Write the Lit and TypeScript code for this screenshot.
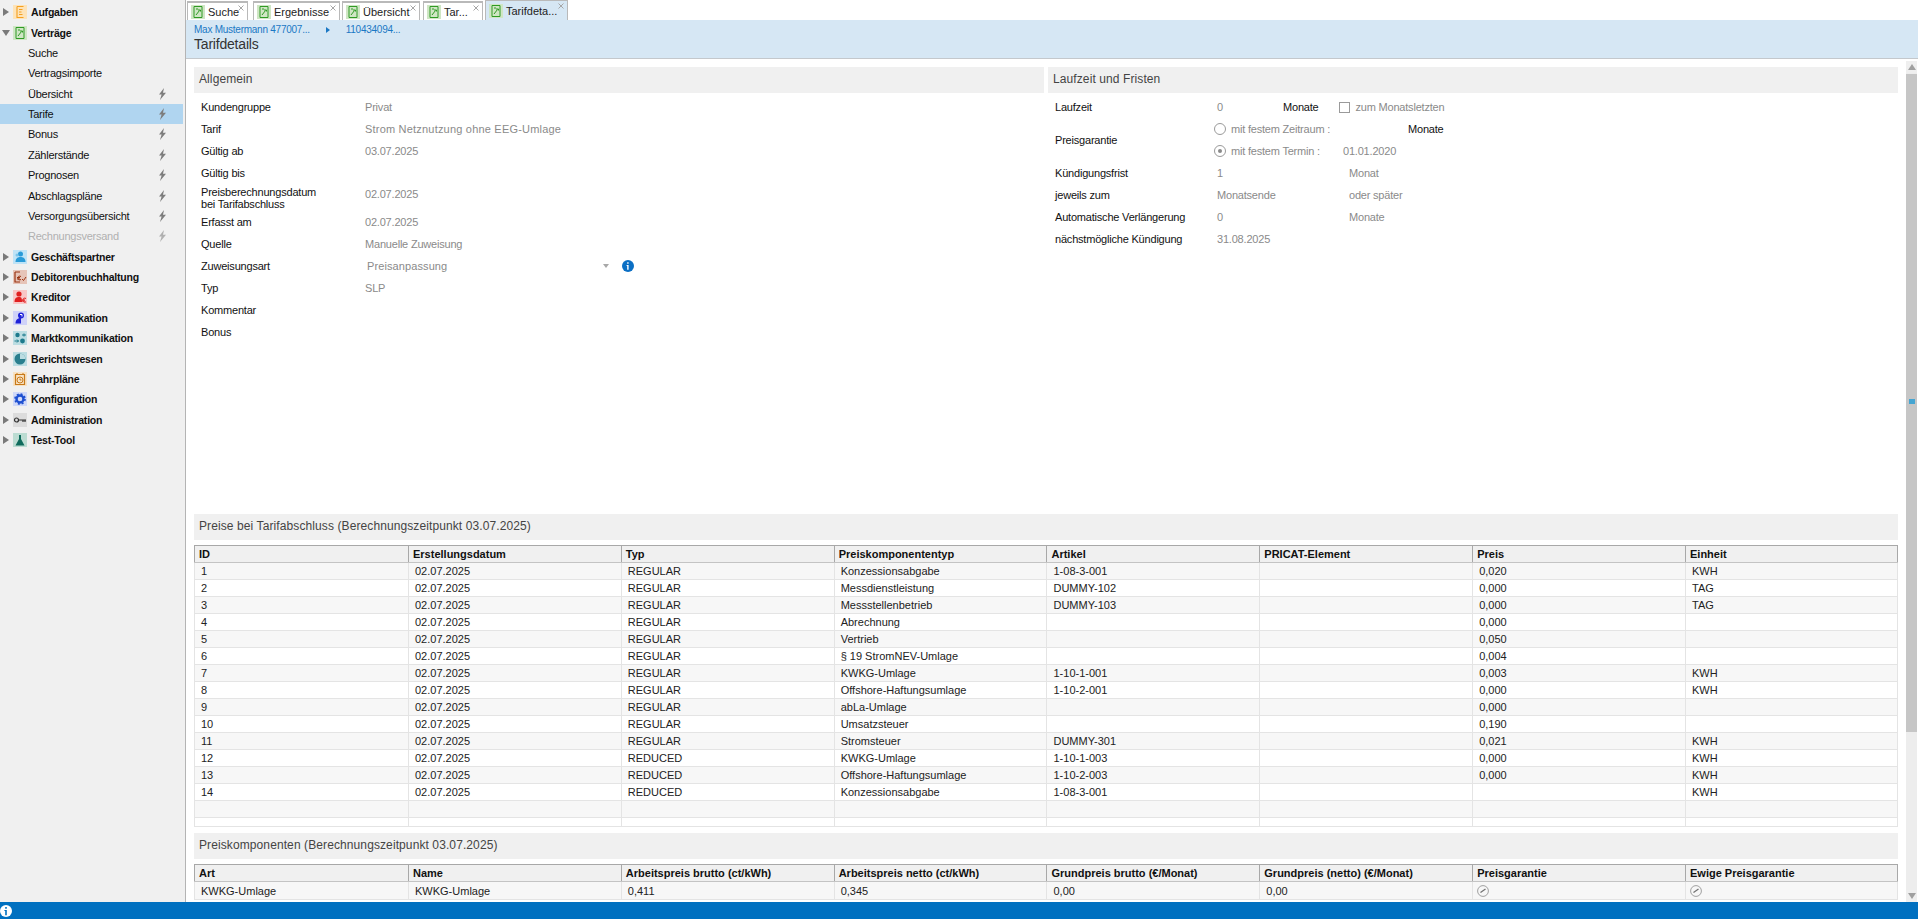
import { css, html, LitElement, svg } from "lit";
import { customElement } from "lit/decorators.js";

const FONT = css`"Liberation Sans", Arial, sans-serif`;

const navIcons: Record<string, { bg: string; art: any }> = {
  Aufgaben: {
    bg: "#fde3b8",
    art: svg`<path d="M4 1.5v11h6.5M4 1.5h6.5" fill="none" stroke="#f5a020" stroke-width="1.1"/><path d="M6 4.5h3.5M6 7h2.5M6 9.5h3.5" stroke="#f5a020"/>`,
  },
  "Verträge": {
    bg: "#cfe6c4",
    art: svg`<path d="M3 1.5h8v11H3z" fill="none" stroke="#2f9a24"/><path d="M5 10l3.5-4.5M7 5h2.5v1.5M5 4h2" fill="none" stroke="#2f9a24"/>`,
  },
  "Geschäftspartner": {
    bg: "#bfe3f6",
    art: svg`<circle cx="7.5" cy="4" r="2.5" fill="#2a9bd8"/><path d="M2.5 12c0-4 2.5-5 5-5s5 1 5 5z" fill="#2a9bd8"/><circle cx="4" cy="5" r="1.5" fill="#7cc4ea"/>`,
  },
  Debitorenbuchhaltung: {
    bg: "#e6c4b8",
    art: svg`<path d="M2 2h5M2 2v10h5" fill="none" stroke="#9a3412" stroke-width="1.2"/><path d="M8 6.5c-2 -1 -3 0 -3 1.5s1 2.5 3 1.5M4 7.5h3M4 9h3" fill="none" stroke="#9a3412"/><path d="M9 9l1.5 1.5L13 7" fill="none" stroke="#9a3412"/>`,
  },
  Kreditor: {
    bg: "#f8c6c6",
    art: svg`<circle cx="6" cy="4" r="2.6" fill="#e02020"/><path d="M1.5 12c0-4 2-5 4.5-5s3 1 3 5z" fill="#e02020"/><path d="M13 8.5c-2-1-3 0-3 1.7s1 2.6 3 1.6M9 10h3M9 11h3" fill="none" stroke="#e02020"/>`,
  },
  Kommunikation: {
    bg: "#cfd2f8",
    art: svg`<circle cx="8" cy="4.5" r="3" fill="#1f22d8"/><path d="M2.5 12.5c0-4 2.5-5.5 5.5-5.5v5.5z" fill="#1f22d8"/><path d="M7 3.5h2v2" fill="none" stroke="#fff"/>`,
  },
  Marktkommunikation: {
    bg: "#bcdde2",
    art: svg`<circle cx="4.5" cy="4" r="2.2" fill="#1d7a8c"/><circle cx="9.5" cy="10" r="2.4" fill="#1d7a8c"/><path d="M9 4h4M11 2.5v3M1.5 10h4M4 8.5l1.5 1.5L4 11.5" fill="none" stroke="#1d7a8c"/>`,
  },
  Berichtswesen: {
    bg: "#bcdde2",
    art: svg`<circle cx="7" cy="7" r="5.5" fill="#2a7f8e"/><path d="M7 7V1.5a5.5 5.5 0 0 1 5.5 5.5z" fill="#bcdde2"/>`,
  },
  "Fahrpläne": {
    bg: "#f7e2c4",
    art: svg`<path d="M2.5 2.5h9v10h-9z" fill="none" stroke="#c87a1a" stroke-width="1.2"/><circle cx="7" cy="8" r="3" fill="none" stroke="#c87a1a"/><path d="M7 6.5V8h1.5M4 1v2M10 1v2" fill="none" stroke="#c87a1a"/>`,
  },
  Konfiguration: {
    bg: "#cfd8f8",
    art: svg`<circle cx="7" cy="7" r="3.5" fill="none" stroke="#1d4fd0" stroke-width="2.4"/><circle cx="7" cy="7" r="5" fill="none" stroke="#1d4fd0" stroke-width="1.6" stroke-dasharray="2 1.93"/>`,
  },
  Administration: {
    bg: "#dcdcdc",
    art: svg`<circle cx="3.5" cy="7" r="2" fill="none" stroke="#333" stroke-width="1.2"/><path d="M5.5 7H13M10 7v2M12 7v2" fill="none" stroke="#333" stroke-width="1.2"/>`,
  },
  "Test-Tool": {
    bg: "#bcdcd2",
    art: svg`<path d="M5.5 1.5h3M6 2v4l-3.5 6.5h9L8 6V2z" fill="#0f6b5c"/>`,
  },
};

const bolt = html`<svg class="bolt" width="9" height="12" viewBox="0 0 9 12"><path d="M6 0L1 6.5h2.6L2 12l6-7.2H5z" fill="#7d7d7d"/></svg>`;

@customElement("side-nav")
class SideNav extends LitElement {
  static styles = css`
    :host {
      display: block;
      width: 185px;
      flex: none;
      background: #f0f0f0;
      border-right: 1px solid #b4b4b4;
      padding-top: 2px;
      font: 11px ${FONT};
      color: #111;
    }
    .row {
      height: 20.38px;
      display: flex;
      align-items: center;
      white-space: nowrap;
    }
    .arrow {
      width: 10px;
      flex: none;
      margin: 0 1px 0 2px;
    }
    .ico {
      width: 14px;
      height: 14px;
      flex: none;
      margin-right: 4px;
    }
    .group {
      font-weight: bold;
      font-size: 10.5px;
      letter-spacing: -0.2px;
    }
    .item {
      padding-left: 28px;
      padding-right: 16px;
      letter-spacing: -0.25px;
      margin-right: 2px;
    }
    .item span {
      flex: 1;
    }
    .active {
      background: #b0d5f0;
    }
    .off {
      color: #b0b0b0;
    }
    .off .bolt {
      opacity: 0.55;
    }
  `;

  group(name: string, open = false) {
    const i = navIcons[name];
    return html`<div class="row group">
      <svg class="arrow" width="10" height="10" viewBox="0 0 10 10">
        ${open
          ? svg`<path d="M0 2h8L4 8z" fill="#7a7a7a"/>`
          : svg`<path d="M1 1l6 4-6 4z" fill="#7a7a7a"/>`}
      </svg>
      <svg class="ico" viewBox="0 0 14 14">
        <rect width="14" height="14" fill=${i.bg} />${i.art}
      </svg>
      ${name}
    </div>`;
  }

  render() {
    const items: [string, boolean, string?][] = [
      ["Suche", false],
      ["Vertragsimporte", false],
      ["Übersicht", true],
      ["Tarife", true, "active"],
      ["Bonus", true],
      ["Zählerstände", true],
      ["Prognosen", true],
      ["Abschlagspläne", true],
      ["Versorgungsübersicht", true],
      ["Rechnungsversand", true, "off"],
    ];
    const rest = [
      "Geschäftspartner",
      "Debitorenbuchhaltung",
      "Kreditor",
      "Kommunikation",
      "Marktkommunikation",
      "Berichtswesen",
      "Fahrpläne",
      "Konfiguration",
      "Administration",
      "Test-Tool",
    ];
    return html`
      ${this.group("Aufgaben")} ${this.group("Verträge", true)}
      ${items.map(
        ([t, b, c]) => html`<div class="row item ${c ?? ""}">
          <span>${t}</span>${b ? bolt : ""}
        </div>`
      )}
      ${rest.map((r) => this.group(r))}
    `;
  }
}

@customElement("tab-bar")
class TabBar extends LitElement {
  static styles = css`
    :host {
      display: flex;
      height: 20px;
      box-sizing: border-box;
      padding: 1px 0 0 1px;
      font: 11px ${FONT};
      color: #222;
      background: #fff;
    }
    .tab {
      position: relative;
      display: flex;
      align-items: center;
      gap: 3px;
      box-sizing: border-box;
      height: 19px;
      padding: 1px 0 0 3px;
      border: 1px solid #b9b9b9;
      border-bottom: none;
      border-top-width: 2px;
      background: #fff;
    }
    .sel {
      background: #d6e7f4;
      border-top-width: 1px;
      height: 20px;
      margin-top: -1px;
    }
    .x {
      position: absolute;
      top: 2px;
      right: 3px;
    }
  `;

  render() {
    const tabs: [string, number, number, boolean?][] = [
      ["Suche", 61, 0],
      ["Ergebnisse", 87, 5],
      ["Übersicht", 78, 2],
      ["Tar...", 60, 3],
      ["Tarifdeta...", 83, 2, true],
    ];
    return tabs.map(
      ([t, w, m, s]) => html`<div class="tab ${s ? "sel" : ""}" style="width:${w}px;margin-left:${m}px">
        <svg width="14" height="14" viewBox="0 0 14 14">
          <rect width="14" height="14" fill="#cfe6c4" />
          <path d="M3 1.5h8v11H3z" fill="none" stroke="#2f9a24" />
          <path d="M5 10l3.5-4.5M7 5h2.5v1.5M5 4h2" fill="none" stroke="#2f9a24" />
        </svg>
        ${t}
        <svg class="x" width="6" height="6" viewBox="0 0 6 6">
          <path d="M.5.5l5 5M5.5.5l-5 5" stroke="#a6a6a6" />
        </svg>
      </div>`
    );
  }
}

const rows: string[][] = [
  ["1", "Konzessionsabgabe", "1-08-3-001", "0,020", "KWH"],
  ["2", "Messdienstleistung", "DUMMY-102", "0,000", "TAG"],
  ["3", "Messstellenbetrieb", "DUMMY-103", "0,000", "TAG"],
  ["4", "Abrechnung", "", "0,000", ""],
  ["5", "Vertrieb", "", "0,050", ""],
  ["6", "§ 19 StromNEV-Umlage", "", "0,004", ""],
  ["7", "KWKG-Umlage", "1-10-1-001", "0,003", "KWH"],
  ["8", "Offshore-Haftungsumlage", "1-10-2-001", "0,000", "KWH"],
  ["9", "abLa-Umlage", "", "0,000", ""],
  ["10", "Umsatzsteuer", "", "0,190", ""],
  ["11", "Stromsteuer", "DUMMY-301", "0,021", "KWH"],
  ["12", "KWKG-Umlage", "1-10-1-003", "0,000", "KWH"],
  ["13", "Offshore-Haftungsumlage", "1-10-2-003", "0,000", "KWH"],
  ["14", "Konzessionsabgabe", "1-08-3-001", "", "KWH"],
];

const gauge = html`<svg class="gauge" width="12" height="12" viewBox="0 0 12 12">
  <circle cx="6" cy="6" r="5.4" fill="none" stroke="#a0a0a0" />
  <path d="M3.5 7.5L8.5 4" stroke="#707070" stroke-width="1.2" />
</svg>`;

@customElement("app-root")
export class AppRoot extends LitElement {
  static styles = css`
    :host {
      display: flex;
      flex-direction: column;
      height: 919px;
      overflow: hidden;
      font: 11px ${FONT};
      color: #111;
      background: #fff;
    }
    .body {
      flex: 1;
      display: flex;
      min-height: 0;
    }
    .main {
      flex: 1;
      min-width: 0;
      display: flex;
      flex-direction: column;
    }
    .head {
      height: 39px;
      flex: none;
      box-sizing: border-box;
      background: #d6e7f4;
      border-bottom: 1px solid #c4c8cc;
      padding: 3px 0 0 8px;
    }
    .crumbs {
      display: flex;
      height: 13px;
      align-items: center;
      color: #1b78c4;
      font-size: 10px;
      letter-spacing: -0.25px;
    }
    .crumbs svg {
      margin: 0 16px 0 16px;
    }
    .title {
      font-size: 14px;
      color: #333;
      line-height: 18px;
      letter-spacing: -0.2px;
      margin-top: -1px;
    }
    .scroller {
      flex: 1;
      min-height: 0;
      display: flex;
    }
    .page {
      flex: 1;
      min-width: 0;
      overflow: hidden;
      padding: 8px 8px 0 8px;
    }
    .bar {
      width: 11px;
      flex: none;
      display: flex;
      flex-direction: column;
      margin: 2px 1px 0 0;
      background: #ededed;
    }
    .btn {
      height: 12px;
      flex: none;
      display: flex;
      align-items: center;
      justify-content: center;
      background: #efefef;
    }
    .thumb {
      height: 658px;
      flex: none;
      background: #c6c6c6;
      position: relative;
      margin-top: 1px;
    }
    .mark {
      position: absolute;
      top: 325px;
      left: 3px;
      right: 2px;
      height: 5px;
      background: #45a5d2;
    }
    .track {
      flex: 1;
    }
    .sec {
      background: #f0f0f0;
      height: 26px;
      line-height: 25px;
      padding-left: 5px;
      font-size: 12px;
      color: #444;
      letter-spacing: 0.1px;
    }
    .cols {
      display: grid;
      grid-template-columns: 850px 1fr;
      gap: 4px;
      height: 447px;
    }
    .form {
      padding: 3px 0 0 7px;
      display: grid;
      grid-template-columns: 164px 1fr;
      grid-auto-rows: 22px;
      align-items: center;
      letter-spacing: -0.2px;
    }
    .val {
      color: #8a8a8a;
      white-space: nowrap;
      display: flex;
      align-items: center;
    }
    .wide {
      letter-spacing: 0.2px;
    }
    .tall {
      line-height: 12px;
      height: 27px;
      padding-top: 1px;
      box-sizing: border-box;
      display: flex;
      align-items: center;
    }
    .tallrow {
      height: 27px;
      padding-bottom: 7px;
      box-sizing: border-box;
    }
    .taller {
      grid-template-rows: repeat(4, 22px) 27px;
    }
    .select {
      width: 244px;
      justify-content: space-between;
      padding-left: 2px;
      box-sizing: border-box;
      letter-spacing: 0.1px;
    }
    .caret {
      width: 0;
      height: 0;
      border: 3.5px solid transparent;
      border-top: 4px solid #a8a8a8;
      border-bottom: none;
    }
    .info {
      margin-left: 13px;
      flex: none;
    }
    .r {
      grid-template-columns: 162px 1fr;
    }
    .k {
      color: #111;
    }
    .u {
      width: 66px;
      flex: none;
    }
    .u2 {
      width: 132px;
      flex: none;
    }
    .check {
      width: 9px;
      height: 9px;
      border: 1px solid #9a9a9a;
      margin: 0 6px 0 20px;
      flex: none;
    }
    .radio {
      height: 22px;
      margin-left: -3px;
    }
    .dot {
      width: 10px;
      height: 10px;
      border: 1px solid #9a9a9a;
      border-radius: 50%;
      margin-right: 5px;
      flex: none;
      display: flex;
      align-items: center;
      justify-content: center;
    }
    .dot i {
      width: 4px;
      height: 4px;
      border-radius: 50%;
      background: #8a8a8a;
    }
    .rtext {
      width: 112px;
      flex: none;
    }
    .rspace {
      width: 65px;
      flex: none;
    }
    .stack {
      grid-row: span 2;
    }
    table {
      border-collapse: collapse;
      table-layout: fixed;
      width: 1704px;
      border: 1px solid #a8a8a8;
      margin-top: 5px;
      color: #222;
    }
    th,
    td {
      height: 16px;
      padding: 0 0 0 4px;
      border: 1px solid #e4e4e4;
      text-align: left;
      white-space: nowrap;
      overflow: hidden;
      box-sizing: border-box;
    }
    td {
      padding-left: 6px;
      height: 17px;
    }
    th {
      background: #f0f0f0;
      color: #111;
      font-weight: bold;
      height: 17px;
      border: 1px solid #a8a8a8;
      border-bottom-color: #c4c4c4;
    }
    th:first-child {
      width: 214px;
    }
    th:last-child {
      width: 212px;
    }
    tr:nth-child(odd) td {
      background: #f7f7f7;
    }
    .short td {
      height: 9px;
    }
    .gap {
      margin-top: 6px;
    }
    .clip {
      height: 44px;
      overflow: hidden;
    }
    .t2 td {
      height: 18px;
    }
    .gauge {
      display: block;
      margin-left: -2px;
    }
    .status {
      height: 17px;
      flex: none;
      background: #0070c0;
      display: flex;
      align-items: center;
    }
  `;

  renderLeft() {
    const r: [string, string, string?][] = [
      ["Kundengruppe", "Privat"],
      ["Tarif", "Strom Netznutzung ohne EEG-Umlage", "wide"],
      ["Gültig ab", "03.07.2025"],
      ["Gültig bis", ""],
    ];
    const s: [string, string][] = [
      ["Erfasst am", "02.07.2025"],
      ["Quelle", "Manuelle Zuweisung"],
    ];
    return html`<div class="form taller">
      ${r.map(([k, v, c]) => html`<div class="k">${k}</div><div class="val ${c ?? ""}">${v}</div>`)}
      <div class="k tall"><div>Preisberechnungsdatum<br />bei Tarifabschluss</div></div>
      <div class="val tallrow">02.07.2025</div>
      ${s.map(([k, v]) => html`<div class="k">${k}</div><div class="val">${v}</div>`)}
      <div class="k">Zuweisungsart</div>
      <div class="val">
        <div class="val select">Preisanpassung<span class="caret"></span></div>
        <svg class="info" width="12" height="12" viewBox="0 0 12 12">
          <circle cx="6" cy="6" r="6" fill="#0b6fc4" />
          <path d="M6.6 2.2v1.6H5.2V2.2zM6.6 5v4.8H5.2V6H4.6V5z" fill="#fff" />
        </svg>
      </div>
      <div class="k">Typ</div>
      <div class="val">SLP</div>
      <div class="k">Kommentar</div>
      <div></div>
      <div class="k">Bonus</div>
      <div></div>
    </div>`;
  }

  renderRight() {
    return html`<div class="form r">
      <div class="k">Laufzeit</div>
      <div class="val">
        <span class="u">0</span><span class="k">Monate</span><span class="check"></span
        >zum Monatsletzten
      </div>
      <div class="k stack">Preisgarantie</div>
      <div class="val radio">
        <span class="dot"></span><span class="rtext">mit festem Zeitraum :</span>
        <span class="rspace"></span><span class="k">Monate</span>
      </div>
      <div class="val radio">
        <span class="dot"><i></i></span><span class="rtext">mit festem Termin :</span>
        01.01.2020
      </div>
      <div class="k">Kündigungsfrist</div>
      <div class="val"><span class="u2">1</span>Monat</div>
      <div class="k">jeweils zum</div>
      <div class="val"><span class="u2">Monatsende</span>oder später</div>
      <div class="k">Automatische Verlängerung</div>
      <div class="val"><span class="u2">0</span>Monate</div>
      <div class="k">nächstmögliche Kündigung</div>
      <div class="val">31.08.2025</div>
    </div>`;
  }

  render() {
    const head1 = ["ID", "Erstellungsdatum", "Typ", "Preiskomponententyp", "Artikel", "PRICAT-Element", "Preis", "Einheit"];
    const head2 = [
      "Art",
      "Name",
      "Arbeitspreis brutto (ct/kWh)",
      "Arbeitspreis netto (ct/kWh)",
      "Grundpreis brutto (€/Monat)",
      "Grundpreis (netto) (€/Monat)",
      "Preisgarantie",
      "Ewige Preisgarantie",
    ];
    return html`
      <div class="body">
        <side-nav></side-nav>
        <div class="main">
          <tab-bar></tab-bar>
          <div class="head">
            <div class="crumbs">
              <span>Max Mustermann 477007...</span>
              <svg width="4" height="6" viewBox="0 0 4 6"><path d="M0 0l4 3-4 3z" fill="#1b78c4" /></svg>
              <span>110434094...</span>
            </div>
            <div class="title">Tarifdetails</div>
          </div>
          <div class="scroller">
            <div class="page">
              <div class="cols">
                <div>
                  <div class="sec">Allgemein</div>
                  ${this.renderLeft()}
                </div>
                <div>
                  <div class="sec">Laufzeit und Fristen</div>
                  ${this.renderRight()}
                </div>
              </div>
              <div class="sec">Preise bei Tarifabschluss (Berechnungszeitpunkt 03.07.2025)</div>
              <table>
                <thead>
                  <tr>${head1.map((h) => html`<th>${h}</th>`)}</tr>
                </thead>
                <tbody>
                  ${rows.map(
                    (r, i) => html`<tr>
                      <td>${r[0]}</td>
                      <td>02.07.2025</td>
                      <td>${i < 11 ? "REGULAR" : "REDUCED"}</td>
                      <td>${r[1]}</td>
                      <td>${r[2]}</td>
                      <td></td>
                      <td>${r[3]}</td>
                      <td>${r[4]}</td>
                    </tr>`
                  )}
                  <tr>${head1.map(() => html`<td></td>`)}</tr>
                  <tr class="short">${head1.map(() => html`<td></td>`)}</tr>
                </tbody>
              </table>
              <div class="sec gap">Preiskomponenten (Berechnungszeitpunkt 03.07.2025)</div>
              <div class="clip">
                <table class="t2">
                  <thead>
                    <tr>${head2.map((h) => html`<th>${h}</th>`)}</tr>
                  </thead>
                  <tbody>
                    <tr>
                      <td>KWKG-Umlage</td>
                      <td>KWKG-Umlage</td>
                      <td>0,411</td>
                      <td>0,345</td>
                      <td>0,00</td>
                      <td>0,00</td>
                      <td>${gauge}</td>
                      <td>${gauge}</td>
                    </tr>
                  </tbody>
                </table>
              </div>
            </div>
            <div class="bar">
              <div class="btn">
                <svg width="8" height="6" viewBox="0 0 8 6"><path d="M4 0l4 6H0z" fill="#a0a0a0" /></svg>
              </div>
              <div class="thumb"><div class="mark"></div></div>
              <div class="track"></div>
              <div class="btn">
                <svg width="8" height="6" viewBox="0 0 8 6"><path d="M0 0h8L4 6z" fill="#a0a0a0" /></svg>
              </div>
            </div>
          </div>
        </div>
      </div>
      <div class="status">
        <svg width="12" height="12" viewBox="0 0 12 12">
          <circle cx="6" cy="6" r="6" fill="#fff" />
          <path d="M6.8 2v1.7H5.2V2zM6.8 5v5.2H5.2V6H4.4V5z" fill="#0070c0" />
        </svg>
      </div>
    `;
  }
}
